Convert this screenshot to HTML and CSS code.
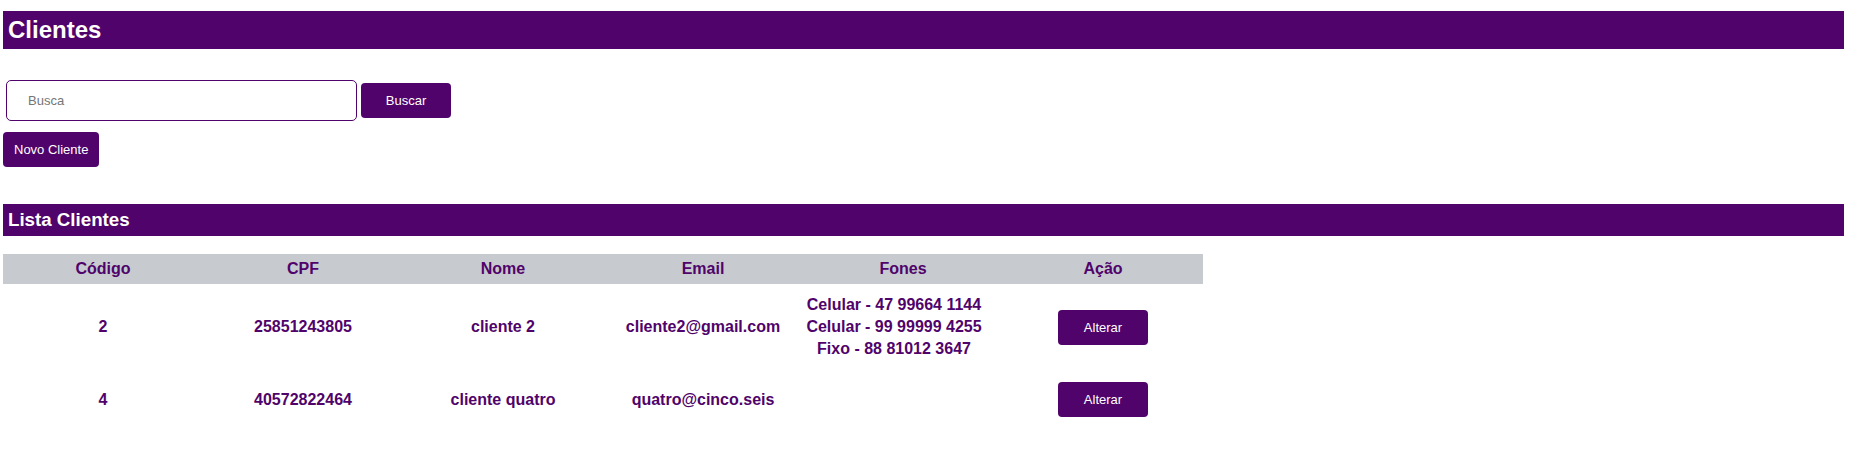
FILE: index.html
```html
<!DOCTYPE html>
<html lang="pt-BR">
<head>
<meta charset="utf-8">
<title>Clientes</title>
<link rel="stylesheet" href="styles.css">
</head>
<body>
<div class="page">
  <h2 class="bar bar-main">Clientes</h2>

  <form class="search-row">
    <input class="search-input" type="text" placeholder="Busca">
    <button class="btn btn-search" type="button">Buscar</button>
  </form>

  <button class="btn btn-new" type="button">Novo Cliente</button>

  <h3 class="bar bar-sub">Lista Clientes</h3>

  <table class="grid">
    <thead>
      <tr>
        <th>Código</th>
        <th>CPF</th>
        <th>Nome</th>
        <th>Email</th>
        <th>Fones</th>
        <th>Ação</th>
      </tr>
    </thead>
    <tbody>
      <tr>
        <td>2</td>
        <td>25851243805</td>
        <td>cliente 2</td>
        <td>cliente2@gmail.com</td>
        <td>
          <div class="phones">
            <div class="phone">Celular - 47 99664 1144</div>
            <div class="phone">Celular - 99 99999 4255</div>
            <div class="phone">Fixo - 88 81012 3647</div>
          </div>
        </td>
        <td><button class="btn btn-edit" type="button">Alterar</button></td>
      </tr>
      <tr>
        <td>4</td>
        <td>40572822464</td>
        <td>cliente quatro</td>
        <td>quatro@cinco.seis</td>
        <td></td>
        <td><button class="btn btn-edit" type="button">Alterar</button></td>
      </tr>
    </tbody>
  </table>
</div>
</body>
</html>
```

FILE: styles.css
```css
* {
  box-sizing: border-box;
}

html, body {
  margin: 0;
  padding: 0;
  background: #ffffff;
}

body {
  font-family: "Liberation Sans", Arial, sans-serif;
  color: #50036a;
}

.page {
  padding: 11px 5px 0 3px;
}

.bar {
  margin: 0;
  background: #50036a;
  color: #ffffff;
  font-weight: bold;
  padding-left: 5px;
}

.bar-main {
  height: 38px;
  line-height: 38px;
  font-size: 24px;
}

.bar-sub {
  margin-top: 37px;
  height: 32px;
  line-height: 32px;
  font-size: 18.72px;
}

.search-row {
  display: flex;
  align-items: center;
  margin: 31px 0 0 3px;
}

.search-input {
  width: 351px;
  height: 41px;
  border: 1px solid #50036a;
  border-radius: 5px;
  padding: 0 0 0 21px;
  font-family: "Liberation Sans", Arial, sans-serif;
  font-size: 13px;
  color: #333333;
  outline: none;
}

.search-input::placeholder {
  color: #757575;
}

.btn {
  display: inline-block;
  height: 35px;
  border: none;
  border-radius: 4px;
  background: #50036a;
  color: #ffffff;
  font-family: "Liberation Sans", Arial, sans-serif;
  font-size: 13px;
  padding: 0;
  cursor: pointer;
}

.btn-search {
  width: 90px;
  margin-left: 4px;
}

.btn-new {
  display: block;
  margin-top: 11px;
  padding: 0 11px;
}

.btn-edit {
  width: 90px;
  vertical-align: middle;
  margin: 2px 0;
}

.grid {
  margin-top: 18px;
  width: 1200px;
  border-collapse: collapse;
  border-spacing: 0;
  table-layout: fixed;
}

.grid th {
  height: 30px;
  padding: 0;
  background: #c7cbcf;
  font-size: 16px;
  font-weight: bold;
  text-align: center;
  vertical-align: middle;
}

.grid td {
  padding: 10px 0;
  font-size: 16px;
  font-weight: bold;
  text-align: center;
  vertical-align: middle;
  line-height: 22px;
}

.phones {
  padding-right: 18px;
}

.phone {
  line-height: 22px;
}
```
